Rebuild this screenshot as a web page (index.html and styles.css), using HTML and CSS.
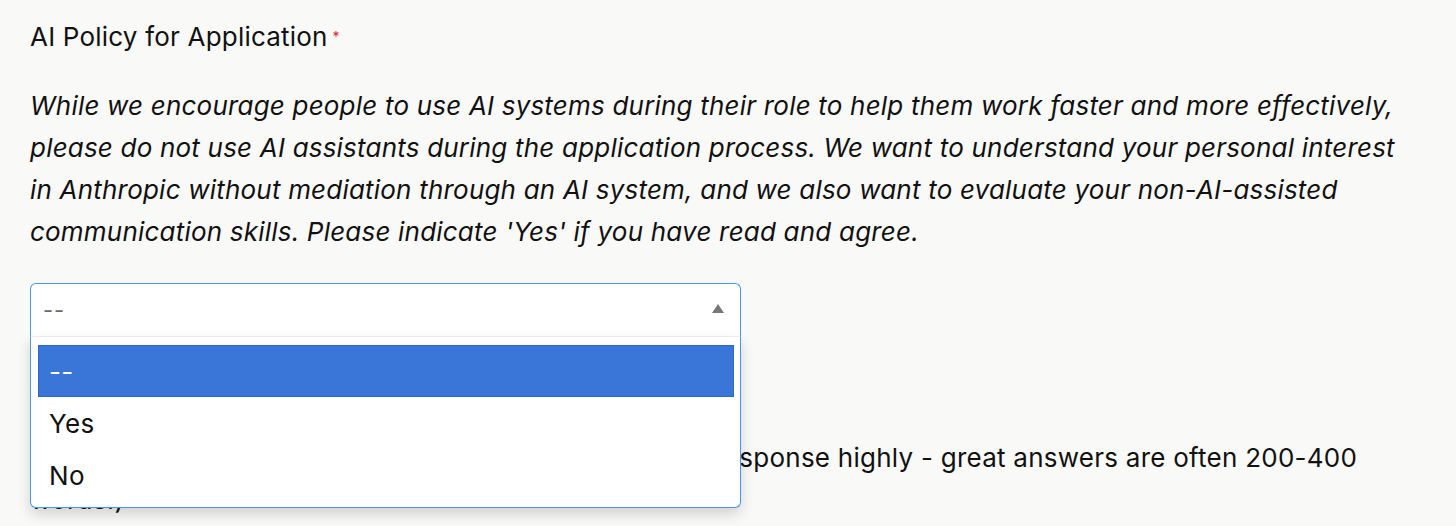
FILE: index.html
```html
<!DOCTYPE html>
<html lang="en">
<head>
<meta charset="utf-8">
<title>AI Policy for Application</title>
<link rel="stylesheet" href="styles.css">
</head>
<body>
<main class="form">
  <section class="field">
    <label class="label">AI Policy for Application<span class="req">*</span></label>
    <p class="desc">While we encourage people to use AI systems during their role to help them work faster and more effectively, please do not use AI assistants during the application process. We want to understand your personal interest in Anthropic without mediation through an AI system, and we also want to evaluate your non-AI-assisted communication skills. Please indicate 'Yes' if you have read and agree.</p>
    <div class="select-wrap">
      <div class="select">
        <span class="select-value">--</span>
        <span class="arrow"></span>
      </div>
      <ul class="menu">
        <li class="option active">--</li>
        <li class="option">Yes</li>
        <li class="option">No</li>
      </ul>
    </div>
  </section>
  <section class="field second">
    <label class="label">Why Anthropic?<span class="req">*</span></label>
    <p class="plain">Why do you want to work at Anthropic? (We value this response highly - great answers are often 200-400 words.)</p>
  </section>
</main>
</body>
</html>
```

FILE: styles.css
```css
html, body {
  margin: 0;
  padding: 0;
  background: #f9f9f8;
  height: 100%;
  overflow: hidden;
}
body {
  font-family: Inter, "Liberation Sans", Arial, sans-serif;
  color: #111;
}
.form {
  padding: 20px 0 0 30px;
  width: 1380px;
}
.label {
  display: block;
  font-size: 26px;
  letter-spacing: 0.2px;
  line-height: 34px;
  color: #111;
}
.req {
  color: #e0242f;
  font-size: 14px;
  vertical-align: 4px;
  margin-left: 5px;
}
.desc {
  margin: 31px 0 0;
  font-size: 26px;
  letter-spacing: 0.2px;
  line-height: 42px;
  font-style: italic;
  color: #111;
}
.plain {
  margin: 31px 0 0;
  font-size: 26px;
  letter-spacing: 0.25px;
  line-height: 42px;
  color: #111;
}
.select-wrap {
  position: relative;
  margin-top: 30px;
  width: 711px;
}
.select {
  box-sizing: border-box;
  height: 54px;
  background: #fff;
  border: 1px solid #4b95f2;
  border-bottom: 1px solid #f1f1f1;
  border-radius: 6px 6px 0 0;
  display: flex;
  align-items: center;
  justify-content: space-between;
  padding: 0 16px 0 12px;
}
.select-value {
  font-size: 22px;
  color: #6b6b6b;
  letter-spacing: 1px;
}
.arrow {
  width: 0;
  height: 0;
  border-left: 6px solid transparent;
  border-right: 6px solid transparent;
  border-bottom: 9px solid #777;
  margin-top: -4px;
}
.menu {
  position: absolute;
  top: 100%;
  left: 0;
  right: 0;
  box-sizing: border-box;
  margin: 0;
  list-style: none;
  background: #fff;
  border: 1px solid #4b95f2;
  border-top: none;
  border-radius: 0 0 6px 6px;
  padding: 8px 6px 6px 7px;
  box-shadow: 0 6px 14px rgba(0, 0, 0, 0.16);
  z-index: 2;
}
.option {
  box-sizing: border-box;
  height: 52px;
  display: flex;
  align-items: center;
  padding-left: 11px;
  font-size: 26px;
  letter-spacing: 0.3px;
  color: #111;
}
.option.active {
  background: #3a76d8;
  border: 1px solid #2f67c7;
  color: #fff;
  padding-left: 10px;
}
.second {
  margin-top: 35px;
}
```
